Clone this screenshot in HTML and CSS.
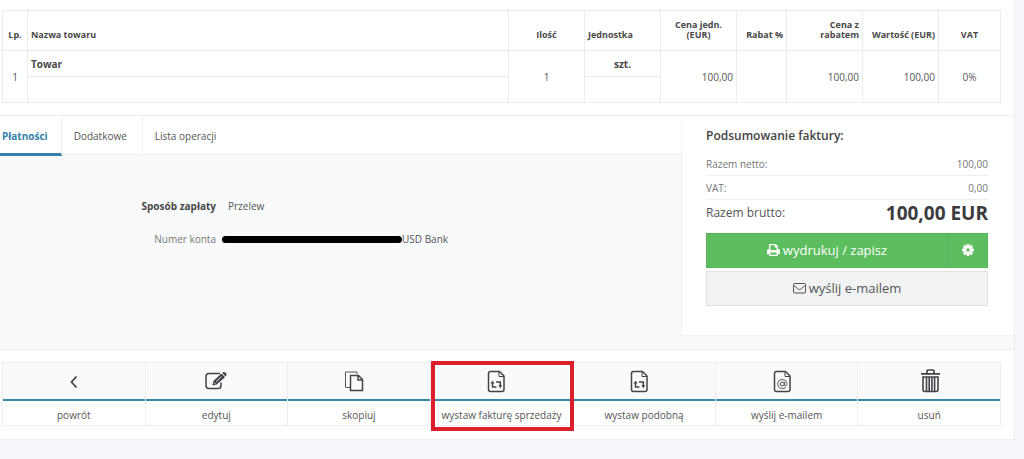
FILE: index.html
```html
<!DOCTYPE html>
<html lang="pl">
<head>
<meta charset="utf-8">
<title>Faktura</title>
<meta name="viewport" content="width=device-width, initial-scale=1">
<link rel="stylesheet" href="styles.css">
</head>
<body>
<main class="panel">
  <section class="items">
    <table class="items-table">
      <colgroup>
        <col class="col-no"><col><col class="col-std"><col class="col-std"><col class="col-std"><col class="col-discount"><col class="col-std"><col class="col-std"><col class="col-vat">
      </colgroup>
      <thead>
        <tr>
          <th class="center">Lp.</th>
          <th>Nazwa towaru</th>
          <th class="center">Ilość</th>
          <th>Jednostka</th>
          <th class="center">Cena jedn. (EUR)</th>
          <th class="right">Rabat %</th>
          <th class="right">Cena z rabatem</th>
          <th class="right">Wartość (EUR)</th>
          <th class="center">VAT</th>
        </tr>
      </thead>
      <tbody>
        <tr>
          <td class="center" rowspan="2">1</td>
          <td class="strong">Towar</td>
          <td class="center" rowspan="2">1</td>
          <td class="strong center">szt.</td>
          <td class="right" rowspan="2">100,00</td>
          <td rowspan="2"></td>
          <td class="right" rowspan="2">100,00</td>
          <td class="right" rowspan="2">100,00</td>
          <td class="center" rowspan="2">0%</td>
        </tr>
        <tr>
          <td class="sub"></td>
          <td class="sub"></td>
        </tr>
      </tbody>
    </table>
  </section>

  <section class="details">
    <div class="payments">
      <nav class="tabs">
        <a class="tab active" href="#platnosci">Płatności</a>
        <a class="tab" href="#dodatkowe">Dodatkowe</a>
        <a class="tab" href="#operacje">Lista operacji</a>
      </nav>
      <dl class="fields">
        <dt class="strong">Sposób zapłaty</dt>
        <dd>Przelew</dd>
        <dt>Numer konta</dt>
        <dd class="account"><span class="redacted"></span>USD Bank</dd>
      </dl>
    </div>

    <aside class="summary">
      <h2>Podsumowanie faktury:</h2>
      <div class="sum-row"><span>Razem netto:</span><span>100,00</span></div>
      <div class="sum-row"><span>VAT:</span><span>0,00</span></div>
      <div class="sum-row total"><span>Razem brutto:</span><strong>100,00 EUR</strong></div>
      <div class="btn-group">
        <button class="btn green grow" type="button">
          <svg width="13" height="12" viewBox="0 0 13 12" aria-hidden="true"><path fill="currentColor" fill-rule="evenodd" d="M2 0H8.700L11 2.300V5H11.500Q13 5 13 6.500V10H11V12H2V10H0V6.500Q0 5 1.500 5H2ZM3.400 1.300V6H9.600V3.400H7.600V1.300ZM3.400 8.500V10.700H9.600V8.500Z"/></svg>
          wydrukuj / zapisz
        </button>
        <button class="btn green gear" type="button" aria-label="Ustawienia">
          <svg width="12" height="12" viewBox="0 0 12 12" aria-hidden="true"><g fill="currentColor"><path d="M4.700 0H7.300V12H4.700ZM0 4.700H12V7.300H0Z"/><path d="M4.700 0H7.300V12H4.700ZM0 4.700H12V7.300H0Z" transform="rotate(45 6 6)"/></g><circle cx="6" cy="6" r="3.300" fill="none" stroke="currentColor" stroke-width="3"/><circle cx="6" cy="6" r="1.700" fill="#5cbe5e"/></svg>
        </button>
      </div>
      <button class="btn grey" type="button">
        <svg width="13" height="12" viewBox="0 0 13 12" fill="none" stroke="currentColor" aria-hidden="true"><rect x=".5" y="1.500" width="12" height="9.500" rx="1"/><path d="M.7 3.300L5.500 7.300Q6.500 8 7.500 7.300L12.300 3.300"/></svg>
        wyślij e-mailem
      </button>
    </aside>
  </section>

  <section class="actions-wrap">
    <nav class="actions">
      <a class="action" href="#powrot">
        <span class="icon"><svg width="24" height="24" viewBox="0 0 24 24"><path d="M14.500 7.500L9.500 13L14.500 18.500" stroke-width="1.800"/></svg></span>
        <span class="label">powrót</span>
      </a>
      <a class="action" href="#edytuj">
        <span class="icon"><svg width="24" height="24" viewBox="0 0 24 24"><path d="M16 4.500H5Q2 4.500 2 7.500V16.500Q2 19.500 5 19.500H14Q17 19.500 17 16.500V13.500" stroke-width="1.500"/><path d="M8.300 16.500L9.500 11.800L17.500 4.500L21 8.200L12.700 15.500Z" fill="currentColor" stroke="none"/><path d="M18.300 3.900L19.500 3Q20.700 2.700 22 4.200Q23 5.500 22.200 6.700L21.500 7.400Z" fill="currentColor" stroke="none"/><path d="M12 12.700L17.600 7.700M10.100 13.700L11.300 15" stroke="#f8fafc" stroke-width=".8"/></svg></span>
        <span class="label">edytuj</span>
      </a>
      <a class="action" href="#skopiuj">
        <span class="icon"><svg width="24" height="24" viewBox="4 0 24 24"><path d="M7 18.500H2.500V3H14V5" stroke-width=".9"/><path d="M7.500 6.500H15.500L19.500 10.500V21.500H7.500ZM15 6.500V11H19.500" stroke-width="1.500"/></svg></span>
        <span class="label">skopiuj</span>
      </a>
      <a class="action highlighted" href="#sprzedaz">
        <span class="icon"><svg width="24" height="24" viewBox="4 0 24 24"><path d="M5.500 2.500H14.500L19 7V20.500Q19 22.500 17 22.500H5.500Q3.500 22.500 3.500 20.500V4.500Q3.500 2.500 5.500 2.500Z" stroke-width="1.500"/><path d="M14 2.500V7.500H19" stroke-width="1"/><path d="M7.500 13V18H11.500M11 13H15.300V17" stroke-width="1.500"/><path d="M5.500 14.500L7.500 11.800L9.500 14.500ZM13.300 16.300H17.300L15.300 19.200Z" fill="currentColor" stroke="none"/></svg></span>
        <span class="label">wystaw fakturę sprzedaży</span>
      </a>
      <a class="action" href="#podobna">
        <span class="icon"><svg width="24" height="24" viewBox="4 0 24 24"><path d="M5.500 2.500H14.500L19 7V20.500Q19 22.500 17 22.500H5.500Q3.500 22.500 3.500 20.500V4.500Q3.500 2.500 5.500 2.500Z" stroke-width="1.500"/><path d="M14 2.500V7.500H19" stroke-width="1"/><path d="M7.500 13V18H11.500M11 13H15.300V17" stroke-width="1.500"/><path d="M5.500 14.500L7.500 11.800L9.500 14.500ZM13.300 16.300H17.300L15.300 19.200Z" fill="currentColor" stroke="none"/></svg></span>
        <span class="label">wystaw podobną</span>
      </a>
      <a class="action" href="#email">
        <span class="icon"><svg width="24" height="24" viewBox="4 0 24 24"><path d="M5.500 2.500H14.500L19 7V20.500Q19 22.500 17 22.500H5.500Q3.500 22.500 3.500 20.500V4.500Q3.500 2.500 5.500 2.500Z" stroke-width="1.500"/><path d="M14 2.500V7.500H19" stroke-width="1"/><circle cx="11.300" cy="15" r="2" stroke-width="1"/><path d="M13.400 13V16Q13.600 17.100 14.800 16.700Q16 16 16 14.500Q15.500 10.500 11.300 10.500Q6.700 10.800 6.700 15Q7 19.500 11.300 19.500Q13.500 19.500 15 18.400" stroke-width=".9"/></svg></span>
        <span class="label">wyślij e-mailem</span>
      </a>
      <a class="action" href="#usun">
        <span class="icon"><svg width="24" height="24" viewBox="0 0 24 24"><path d="M4 4.800H23M10 4V1.800Q10 1 11 1H16Q17 1 17 1.800V4" stroke-width="1.700"/><path d="M6 8H21V20.500Q21 22.500 19 22.500H8Q6 22.500 6 20.500ZM9.500 8V22M12.200 8V22M14.900 8V22M17.600 8V22" stroke-width="1.600"/></svg></span>
        <span class="label">usuń</span>
      </a>
    </nav>
  </section>
</main>
</body>
</html>
```
FILE: styles.css
```css
* { box-sizing: border-box; }

body {
  margin: 0;
  background: #f6f7fa;
  color: #555;
  font: 10px/14px "Open Sans", sans-serif;
}

a { color: inherit; text-decoration: none; }

.panel {
  margin-right: 9px;
  background: #fff;
  border: solid #eceef1;
  border-width: 0 1px 1px 0;
}

.items { padding: 10px 13px 12px 2px; }

.items-table {
  width: 100%;
  table-layout: fixed;
  border-collapse: collapse;
}

.items-table th,
.items-table td {
  border: 1px solid #ececec;
  padding: 0 3px;
  text-align: left;
  font-size: 10px;
}

.items-table th {
  height: 40px;
  padding-bottom: 10px;
  vertical-align: bottom;
  line-height: 10px;
  font-weight: 700;
  font-size: 9px;
  color: #484848;
}

.items-table td { height: 26px; }
.items-table .sub { border-top-color: #f4f4f4; }
.items-table .center { text-align: center; }
.items-table .right { text-align: right; }

.col-no { width: 25px; }
.col-std { width: 76px; }
.col-discount { width: 50px; }
.col-vat { width: 62px; }

.strong { font-weight: 700; color: #484848; }

.details {
  display: flex;
  align-items: flex-start;
  padding-bottom: 13px;
  background: #f8fafc;
  border: solid #eceef1;
  border-width: 1px 0;
}

.payments { flex: 1; }

.tabs {
  display: flex;
  height: 39px;
  background: #fff;
  border-bottom: 1px solid #eceef1;
}

.tab {
  padding: 13px 15px 0 12px;
  border-right: 1px solid #eceef1;
}

.tab:last-child { border-right: 0; }

.tab.active {
  height: 40px;
  padding: 13px 13px 0 2px;
  border-bottom: 3px solid #3282ac;
  color: #3282ac;
  font-weight: 700;
}

.fields {
  display: grid;
  grid-template-columns: 216px 1fr;
  gap: 19px 12px;
  margin: 44px 0 0;
}

.fields dt { text-align: right; color: #777; }
.fields dt.strong { color: #484848; }
.fields dd { margin: 0; }

.account {
  display: flex;
  align-items: center;
}

.redacted {
  width: 180px;
  height: 7px;
  margin-left: -6px;
  border-radius: 4px;
  background: #000;
}

.summary {
  width: 333px;
  padding: 12px 26px 29px 24px;
  background: #fff;
  border: solid #f0f2f5;
  border-width: 0 0 1px 1px;
}

.summary h2 {
  margin: 0 0 8px;
  font-size: 12px;
  line-height: 16px;
  font-weight: 600;
  color: #444;
}

.sum-row {
  display: flex;
  justify-content: space-between;
  align-items: center;
  height: 24px;
  border-bottom: 1px solid #eee;
  color: #777;
}

.sum-row.total {
  height: 33px;
  padding-bottom: 7px;
  border: 0;
  font-size: 12px;
  color: #555;
}

.sum-row strong {
  font-size: 19px;
  color: #3c3c3e;
}

.btn-group { display: flex; }

.btn {
  display: flex;
  align-items: center;
  justify-content: center;
  gap: 3px;
  height: 35px;
  padding: 0 0 1px;
  border: 1px solid;
  font: 13px/18px "Open Sans", sans-serif;
}

.btn.green {
  background: #5cbe5e;
  border-color: #57b259;
  color: #fff;
}

.btn.grow { flex: 1; }

.btn.gear {
  width: 40px;
  border-left: 0;
}

.btn.grey {
  width: 100%;
  margin-top: 3px;
  background: #f0f2f4;
  border-color: #dfe0e2;
  color: #555;
}

.actions-wrap { padding: 12px 13px 13px 2px; }

.actions {
  display: grid;
  grid-template-columns: repeat(7, 1fr);
  border: solid #eceef1;
  border-width: 1px 0 1px 1px;
}

.action {
  position: relative;
  text-align: center;
  border-right: 1px solid #eceef1;
}

.icon {
  display: flex;
  align-items: center;
  justify-content: center;
  height: 38px;
  background: #f8fafc;
  border-bottom: 2px solid #348aab;
  color: #444448;
}

.icon svg {
  overflow: visible;
  fill: none;
  stroke: currentColor;
}

.label {
  display: block;
  padding: 7px 0 3px;
}

.highlighted { z-index: 1; }

.highlighted::after {
  content: "";
  position: absolute;
  inset: -2px -2px -6px 0;
  border: 4px solid #dc1f2d;
}
```
